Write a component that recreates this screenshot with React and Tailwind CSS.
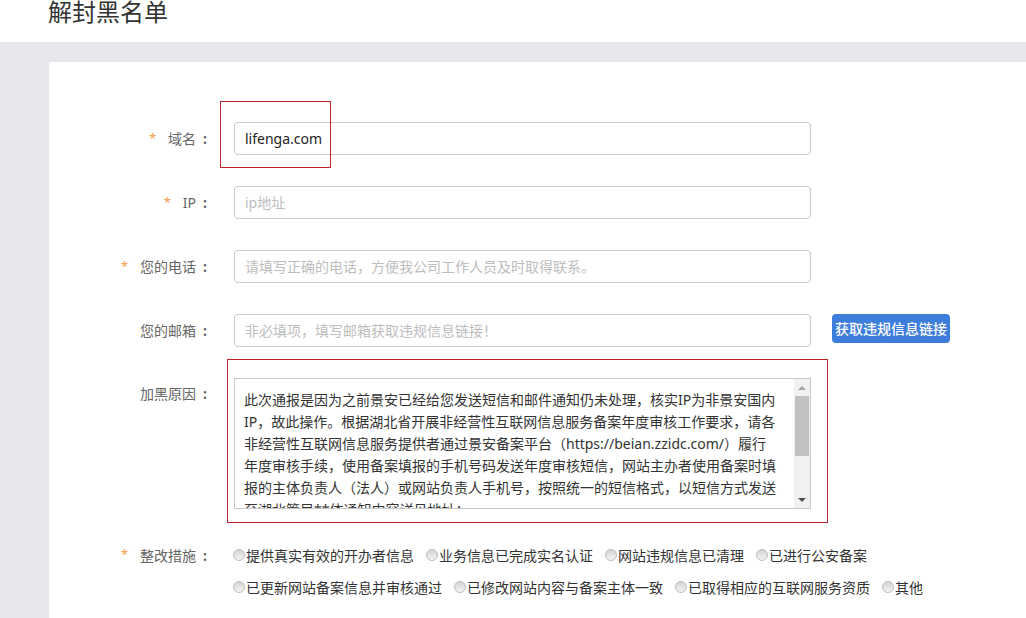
import React from "react";

const font = { fontFamily: '"Noto Sans", "Noto Sans CJK SC", sans-serif' };

const reasonLines = [
  "此次通报是因为之前景安已经给您发送短信和邮件通知仍未处理，核实IP为非景安国内",
  "IP，故此操作。根据湖北省开展非经营性互联网信息服务备案年度审核工作要求，请各",
  "非经营性互联网信息服务提供者通过景安备案平台（https://beian.zzidc.com/）履行",
  "年度审核手续，使用备案填报的手机号码发送年度审核短信，网站主办者使用备案时填",
  "报的主体负责人（法人）或网站负责人手机号，按照统一的短信格式，以短信方式发送",
  "至湖北管局**体通知内容详见地址：",
];

const measures = [
  ["提供真实有效的开办者信息", "业务信息已完成实名认证", "网站违规信息已清理", "已进行公安备案"],
  ["已更新网站备案信息并审核通过", "已修改网站内容与备案主体一致", "已取得相应的互联网服务资质", "其他"],
];

const Label = ({ required, children }) => (
  <div className="w-[163px] shrink-0 flex justify-end items-center text-[14px] text-[#666]">
    {required && <span className="text-[#f39c4b] mr-[12px] text-[13px]">*</span>}
    <span>{children}</span>
    <span className="ml-[7px] mr-[5px] font-bold">:</span>
  </div>
);

const Input = ({ value, placeholder }) => (
  <div className="w-[577px] h-[33px] border border-[#c8c8c8] rounded-[4px] bg-white flex items-center px-[10px] text-[14px]">
    {value ? (
      <span className="text-[#222]">{value}</span>
    ) : (
      <span className="text-[#bdbdbd]">{placeholder}</span>
    )}
  </div>
);

const Radio = ({ text }) => (
  <div className="flex items-center mr-[12px]">
    <span className="w-[12px] h-[12px] rounded-full border border-[#bdbdbd] bg-gradient-to-b from-[#d4d4d4] to-[#f4f4f4] mr-[1px]"></span>
    <span className="text-[14px] text-[#333]">{text}</span>
  </div>
);

const App = () => {
  return (
    <div className="w-[1026px] h-[618px] overflow-hidden bg-white" style={font}>
      <div className="h-[42px] pl-[48px]">
        <div className="text-[24px] leading-[24px] text-[#333]">解封黑名单</div>
      </div>
      <div className="h-[576px] bg-[#e6e7ea] pt-[20px] pl-[49px]">
        <div className="h-full bg-white pt-[60px]">
          <div className="flex flex-col gap-[31px]">
            <div className="flex h-[33px]">
              <Label required>域名</Label>
              <div className="ml-[22px] relative">
                <Input value="lifenga.com" />
                <div className="absolute left-[-14px] top-[-21px] w-[111px] h-[67px] border border-[#c0222b]"></div>
              </div>
            </div>
            <div className="flex h-[33px]">
              <Label required>IP</Label>
              <div className="ml-[22px]">
                <Input placeholder="ip地址" />
              </div>
            </div>
            <div className="flex h-[33px]">
              <Label required>您的电话</Label>
              <div className="ml-[22px]">
                <Input placeholder="请填写正确的电话，方便我公司工作人员及时取得联系。" />
              </div>
            </div>
            <div className="flex h-[33px]">
              <Label>您的邮箱</Label>
              <div className="ml-[22px]">
                <Input placeholder="非必填项，填写邮箱获取违规信息链接！" />
              </div>
              <button className="ml-[21px] h-[29px] px-[3px] rounded-[4px] bg-[#3d7ddc] text-white text-[14px] font-medium">
                获取违规信息链接
              </button>
            </div>
            <div className="flex">
              <div className="h-[30px] flex">
                <Label>加黑原因</Label>
              </div>
              <div className="ml-[22px] relative">
                <div className="w-[577px] h-[131px] border border-[#c8c8c8] bg-white flex overflow-hidden">
                  <div className="flex-1 pt-[10px] pl-[9px] text-[14px] leading-[22px] text-[#333] overflow-hidden">
                    {reasonLines.map((line, i) => (
                      <div key={i} className="whitespace-nowrap">{line}</div>
                    ))}
                  </div>
                  <div className="w-[16px] shrink-0 bg-[#f1f1f1] flex flex-col items-center">
                    <div className="h-[17px] flex items-center justify-center">
                      <span className="w-0 h-0 border-l-[4px] border-r-[4px] border-b-[4px] border-l-transparent border-r-transparent border-b-[#a3a3a3]"></span>
                    </div>
                    <div className="w-[14px] h-[60px] bg-[#c1c1c1]"></div>
                    <div className="flex-1"></div>
                    <div className="h-[17px] flex items-center justify-center">
                      <span className="w-0 h-0 border-l-[4px] border-r-[4px] border-t-[4px] border-l-transparent border-r-transparent border-t-[#505050]"></span>
                    </div>
                  </div>
                </div>
                <div className="absolute left-[-7px] top-[-19px] w-[601px] h-[164px] border border-[#c0222b]"></div>
              </div>
            </div>
          </div>
          <div className="flex mt-[30px]">
            <div className="h-[32px] flex">
              <Label required>整改措施</Label>
            </div>
            <div className="ml-[21px] flex flex-col">
              {measures.map((row, i) => (
                <div key={i} className="h-[32px] flex items-center">
                  {row.map((t) => (
                    <Radio key={t} text={t} />
                  ))}
                </div>
              ))}
            </div>
          </div>
        </div>
      </div>
    </div>
  );
};

export default App;
